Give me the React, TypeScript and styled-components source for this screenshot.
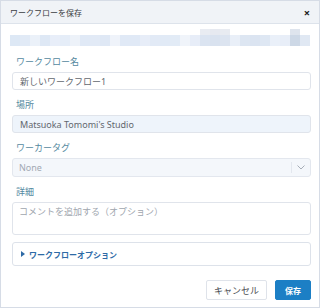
import React from "react";
import styled, { createGlobalStyle } from "styled-components";

const GlobalStyle = createGlobalStyle`
  html, body {
    margin: 0;
    padding: 0;
    background: #ffffff;
  }
  body {
    font-family: "Noto Sans", "Noto Sans CJK JP", sans-serif;
  }
`;

const Dialog = styled.div`
  width: 320px;
  height: 308px;
  box-sizing: border-box;
  border: 1px solid #d6dce6;
  background: #ffffff;
  display: flex;
  flex-direction: column;
`;

const Header = styled.div`
  height: 22px;
  flex: none;
  background: #f0f3f7;
  border-bottom: 1px solid #dde3eb;
  display: flex;
  align-items: center;
  justify-content: space-between;
  padding: 0 9px 0 9px;
`;

const Title = styled.span`
  font-size: 8px;
  color: #3a3d42;
`;

const Close = styled.span`
  font-size: 11px;
  font-weight: 700;
  color: #222222;
  line-height: 1;
`;

const Mosaic = styled.svg`
  display: block;
  margin: 4px 0 0 9px;
  flex: none;
  filter: blur(0.6px);
  opacity: 0.85;
`;

const Body = styled.div`
  padding: 9px 8px 0 11px;
  display: flex;
  flex-direction: column;
`;

const Field = styled.div`
  display: flex;
  flex-direction: column;
  margin-bottom: 9px;
`;

const Label = styled.label`
  font-size: 9px;
  line-height: 12px;
  color: #5489a0;
  padding-left: 4px;
  margin-bottom: 4px;
`;

const Input = styled.div<{ $filled?: boolean }>`
  height: 18px;
  box-sizing: border-box;
  border: 1px solid #e0e4eb;
  border-radius: 3px;
  background: ${(p) => (p.$filled ? "#eef4fb" : "#ffffff")};
  display: flex;
  align-items: center;
  padding: 0 7px;
  font-size: 9px;
  color: #62676e;
`;

const Select = styled.div`
  height: 19px;
  box-sizing: border-box;
  border: 1px solid #e3e7ee;
  border-radius: 3px;
  background: #f4f7fb;
  display: flex;
  align-items: stretch;
  font-size: 9px;
  color: #a2a9b3;
`;

const SelectValue = styled.span`
  flex: 1;
  display: flex;
  align-items: center;
  padding: 0 6px;
`;

const SelectArrow = styled.span`
  width: 18px;
  border-left: 1px solid #e3e7ee;
  margin: 3px 0;
  display: flex;
  align-items: center;
  justify-content: center;
`;

const TextArea = styled.div`
  height: 33px;
  box-sizing: border-box;
  border: 1px solid #e0e4eb;
  border-radius: 3px;
  padding: 3px 6px;
  font-size: 9px;
  line-height: 12px;
  color: #a0a6ae;
`;

const Options = styled.div`
  height: 24px;
  box-sizing: border-box;
  border: 1px solid #dde2ea;
  border-radius: 3px;
  display: flex;
  align-items: center;
  gap: 4px;
  padding: 0 8px;
  margin-top: -2px;
  font-size: 8px;
  font-weight: 700;
  color: #2e6aa6;
`;

const Caret = styled.span`
  width: 0;
  height: 0;
  border-left: 4px solid #2e6aa6;
  border-top: 3px solid transparent;
  border-bottom: 3px solid transparent;
`;

const Footer = styled.div`
  display: flex;
  justify-content: flex-end;
  gap: 8px;
  margin-top: 14px;
`;

const Button = styled.button<{ $primary?: boolean }>`
  height: 20px;
  box-sizing: border-box;
  border-radius: 2px;
  border: 1px solid ${(p) => (p.$primary ? "#1c7fc5" : "#dfe3ea")};
  background: ${(p) => (p.$primary ? "#1c7fc5" : "#ffffff")};
  color: ${(p) => (p.$primary ? "#ffffff" : "#4a4d52")};
  font-family: inherit;
  font-size: ${(p) => (p.$primary ? "8px" : "9px")};
  font-weight: ${(p) => (p.$primary ? 700 : 400)};
  padding: 0 ${(p) => (p.$primary ? "9px" : "7px")};
  cursor: pointer;
`;

const lowRow = [
  "#d8e4f4", "#dce7f5", "#e8eff9", "#d9e5f4", "#e4ecf8", "#e1eaf7",
  "#eaf0f9", "#dbe6f5", "#dde7f5", "#dae5f4", "#edf2fa", "#dbe6f5",
  "#dbe6f5", "#e3ebf7", "#dde7f5", "#dce7f5", "#dee8f5", "#eef3fa",
  "#e3ebf7", "#d5e0ef", "#d3deed", "#d6e0ee", "#e6edf7", "#d8e2f0",
  "#d5e0ef", "#d9e3f1", "#e7eef8", "#e5ecf7", "#c5d2e2", "#dbe4f2",
];

const highRow: Record<number, string> = {
  19: "#e6e9f0",
  20: "#e2e6ee",
  21: "#e4e8ef",
  28: "#d9e0ea",
};

export default function App() {
  return (
    <>
      <GlobalStyle />
      <Dialog>
        <Header>
          <Title>ワークフローを保存</Title>
          <Close>×</Close>
        </Header>
        <Mosaic width="302" height="19" viewBox="0 0 302 19">
          {lowRow.map((c, i) => (
            <rect key={"l" + i} x={i * 10} y={7} width={10} height={11} fill={c} />
          ))}
          {Object.entries(highRow).map(([i, c]) => (
            <rect key={"h" + i} x={Number(i) * 10} y={1} width={10} height={6} fill={c} />
          ))}
        </Mosaic>
        <Body>
          <Field>
            <Label>ワークフロー名</Label>
            <Input>新しいワークフロー1</Input>
          </Field>
          <Field>
            <Label>場所</Label>
            <Input $filled>Matsuoka Tomomi's Studio</Input>
          </Field>
          <Field>
            <Label>ワーカータグ</Label>
            <Select>
              <SelectValue>None</SelectValue>
              <SelectArrow>
                <svg width="8" height="5" viewBox="0 0 8 5">
                  <path d="M0.5 0.5 L4 4 L7.5 0.5" fill="none" stroke="#a6adb7" strokeWidth="1" />
                </svg>
              </SelectArrow>
            </Select>
          </Field>
          <Field>
            <Label>詳細</Label>
            <TextArea>コメントを追加する（オプション）</TextArea>
          </Field>
          <Options>
            <Caret />
            ワークフローオプション
          </Options>
          <Footer>
            <Button>キャンセル</Button>
            <Button $primary>保存</Button>
          </Footer>
        </Body>
      </Dialog>
    </>
  );
}
